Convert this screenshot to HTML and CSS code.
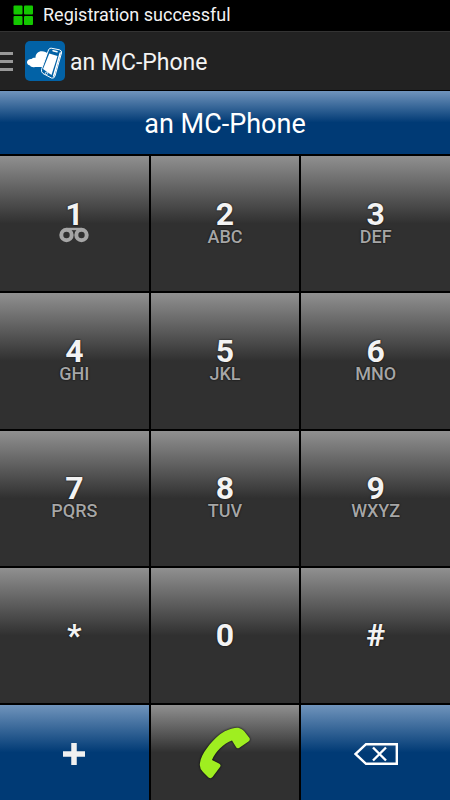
FILE: index.html
```html
<!DOCTYPE html>
<html lang="en">
<head>
<meta charset="utf-8">
<meta name="viewport" content="width=device-width, initial-scale=1">
<title>an MC-Phone</title>
<link rel="stylesheet" href="styles.css">
</head>
<body>
<div class="app">
  <div class="status" role="status">
    <svg class="status-icon" viewBox="0 0 20 20" aria-hidden="true"><g fill="#14c800"><rect x="0.5" y="0.5" width="9" height="9" rx="1"/><rect x="11" y="0.5" width="9" height="9" rx="1"/><rect x="0.5" y="11" width="9" height="9" rx="1"/><rect x="11" y="11" width="9" height="9" rx="1"/></g></svg>
    <span>Registration successful</span>
  </div>
  <header class="bar">
    <button class="menu" aria-label="Menu"><span></span><span></span><span></span></button>
    <svg class="logo" viewBox="0 0 40 40" aria-hidden="true">
      <rect width="40" height="40" rx="5" fill="#0262a6"/>
      <path d="M20 26H10C8 26.500 5.500 26 5 24.500C3 24 1.800 22.500 2 21C2.300 18.800 4.500 17.800 6.500 18C7.500 17 9 16.500 10.500 16.800C10.500 12.500 13.500 10 17 10.200C19.500 10.200 21.500 11 23 13L25 14Z" fill="#fff"/>
      <path d="M26.200 7.200 34.500 8.800Q37 9.500 36.500 12L30 35Q29 38 26.500 37L18 32.500Q16 31 16.500 28.500L23.500 9Q24.400 6.800 26.200 7.200Z" fill="#0262a6" stroke="#fff"/>
      <path d="M24.300 12.500 32.500 15 26.500 34 18 28Z" fill="#fff"/>
      <path d="M35.200 12 28.600 35M28 9.800 32 10.800" fill="none" stroke="#fff" stroke-width="1.500" stroke-linecap="round"/>
      <circle cx="21.500" cy="32.300" r="1.200" fill="none" stroke="#fff" stroke-width="0.800"/>
    </svg>
    <h1 class="title">an MC-Phone</h1>
  </header>
  <main class="dialer">
    <div class="banner">an MC-Phone</div>
    <div class="keypad">
      <button class="key" aria-label="1 voicemail"><span class="digit">1</span><span class="letters"><svg class="voicemail" viewBox="0 0 30 15" aria-hidden="true"><g fill="none" stroke="#a6a6a6" stroke-width="4"><circle cx="7.500" cy="7.500" r="5.200"/><circle cx="22.500" cy="7.500" r="5.200"/></g><path d="M7.500 1.500H22.500" stroke="#a6a6a6" stroke-width="2.400"/></svg></span></button>
      <button class="key"><span class="digit">2</span><span class="letters">ABC</span></button>
      <button class="key"><span class="digit">3</span><span class="letters">DEF</span></button>
      <button class="key"><span class="digit">4</span><span class="letters">GHI</span></button>
      <button class="key"><span class="digit">5</span><span class="letters">JKL</span></button>
      <button class="key"><span class="digit">6</span><span class="letters">MNO</span></button>
      <button class="key"><span class="digit">7</span><span class="letters">PQRS</span></button>
      <button class="key"><span class="digit">8</span><span class="letters">TUV</span></button>
      <button class="key"><span class="digit">9</span><span class="letters">WXYZ</span></button>
      <button class="key"><span class="digit">*</span></button>
      <button class="key"><span class="digit">0</span></button>
      <button class="key"><span class="digit">#</span></button>
      <button class="key blue" aria-label="Plus"><svg class="plus" viewBox="0 0 22 22" aria-hidden="true"><path d="M11 0V22M0 11H22" stroke="#f0f0f0" stroke-width="5.500"/></svg></button>
      <button class="key" aria-label="Call"><svg class="call" viewBox="0 0 54 54" aria-hidden="true"><path d="M2 37C3 28 13 16 20 10C26 5 35 1 41 2Q44 3 46 5L51.500 12Q52.500 14 50.500 15.500L41 22Q39 23 38 21L34 14.500C26 17 17 26 14 34L21 37.500Q23.500 39 22 41L14.500 51Q13 53 10.500 51.500L5 46Q1 42 2 37Z" fill="#9fee20"/></svg></button>
      <button class="key blue" aria-label="Delete"><svg class="erase" viewBox="0 0 44 22" aria-hidden="true"><path d="M12 1.200H42.800V20.800H12L1.500 11ZM19 4.500 32 17.500M32 4.500 19 17.500" fill="none" stroke="#fff" stroke-width="2.400"/></svg></button>
    </div>
  </main>
</div>
</body>
</html>
```
FILE: styles.css
```css
* {
  box-sizing: border-box;
}

body {
  margin: 0;
  background: #000;
  color: #f3f3f3;
  font-family: Roboto, "Liberation Sans", sans-serif;
}

button {
  margin: 0;
  padding: 0;
  border: 0;
  color: inherit;
  font: inherit;
}

svg {
  display: block;
}

.app {
  display: flex;
  flex-direction: column;
  min-height: 100vh;
}

.status {
  display: flex;
  align-items: center;
  gap: 10px;
  padding: 5px 13px 6px;
  font-size: 18px;
  line-height: 20px;
}

.status-icon {
  width: 20px;
  height: 20px;
}

.bar {
  display: flex;
  align-items: center;
  padding: 9px 0;
  border-top: 1px solid #333;
  background: #222;
}

.menu {
  display: flex;
  flex-direction: column;
  gap: 5px;
  width: 13px;
  margin-right: 12px;
  background: none;
}

.menu span {
  height: 3px;
  background: #999;
}

.logo {
  width: 40px;
  height: 40px;
}

.title {
  margin: 0 0 0 5px;
  padding-top: 4px;
  font-size: 23px;
  font-weight: 400;
  line-height: 36px;
}

.dialer {
  display: flex;
  flex: 1;
  flex-direction: column;
  gap: 2px;
  padding-top: 1px;
}

.banner {
  padding: 18px 16px 14px;
  background: linear-gradient(#7094bc, #003a75 50%);
  color: #fff;
  font-size: 27px;
  line-height: 31px;
  text-align: center;
}

.keypad {
  display: grid;
  flex: 1;
  grid-template-columns: repeat(3, 1fr);
  grid-template-rows: repeat(4, 1fr) 95px;
  gap: 2px;
}

.key {
  display: flex;
  flex-direction: column;
  align-items: center;
  justify-content: center;
  background: linear-gradient(#909090, #303030 50%);
  text-shadow: 0 0 2px #000;
}

.key.blue {
  padding-top: 3px;
  background: linear-gradient(#7094bc, #003a75 50%);
}

.digit {
  font-size: 32px;
  font-weight: 700;
  line-height: 26px;
}

.letters {
  color: #a6a6a6;
  font-size: 18px;
  font-weight: 500;
  line-height: 20px;
}

.voicemail {
  width: 30px;
  height: 20px;
  padding-bottom: 4px;
}

.plus {
  width: 22px;
  height: 22px;
}

.call {
  width: 54px;
  height: 54px;
  filter: drop-shadow(0 0 1px #000);
}

.erase {
  width: 44px;
  height: 22px;
}
```
